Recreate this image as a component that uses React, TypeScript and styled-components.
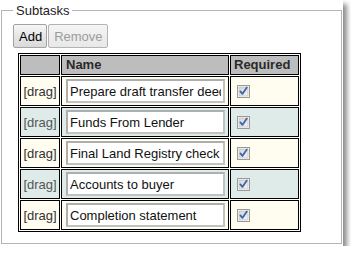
import * as React from 'react';
import styled, { createGlobalStyle } from 'styled-components';

interface Task {
    name: string,
    required: boolean,
}

const tasks: Task[] = [
    { name: 'Prepare draft transfer deed', required: true },
    { name: 'Funds From Lender', required: true },
    { name: 'Final Land Registry check', required: true },
    { name: 'Accounts to buyer', required: true },
    { name: 'Completion statement', required: true },
]

const Check = () => (
    <svg width="13" height="13" viewBox="0 0 13 13">
        <defs>
            <linearGradient id="cbfill" x1="0" y1="0" x2="1" y2="1">
                <stop offset="0" stopColor="#d4d4d4" />
                <stop offset="1" stopColor="#f4f4f4" />
            </linearGradient>
        </defs>
        <rect x="0.5" y="0.5" width="12" height="12" fill="#fff" stroke="#9a9a9a" />
        <rect x="2" y="2" width="9" height="9" fill="url(#cbfill)" stroke="#c4c4c4" strokeWidth="0.8" />
        <path d="M3.4 6.4 L5.4 8.9 L9.8 2.6" fill="none" stroke="#3d67a8" strokeWidth="1.8" strokeLinecap="round" strokeLinejoin="round" />
    </svg>
)

export default function App() {
    return (
        <Window>
            <GlobalStyle />
            <Fieldset>
                <Legend>Subtasks</Legend>
                <ButtonBar>
                    <Button type="button">Add</Button>
                    <Button type="button" disabled>Remove</Button>
                </ButtonBar>
                <Table>
                    <thead>
                        <tr>
                            <DragHead />
                            <NameHead>Name</NameHead>
                            <RequiredHead>Required</RequiredHead>
                        </tr>
                    </thead>
                    <tbody>
                        {tasks.map((t, i) => (
                            <Row key={t.name} $alt={i % 2 === 1}>
                                <DragCell $alt={i % 2 === 1}>[drag]</DragCell>
                                <NameCell>
                                    <NameInput type="text" defaultValue={t.name} />
                                </NameCell>
                                <RequiredCell>
                                    {t.required && <CheckWrap><Check /></CheckWrap>}
                                </RequiredCell>
                            </Row>
                        ))}
                    </tbody>
                </Table>
            </Fieldset>
        </Window>
    )
}

const GlobalStyle = createGlobalStyle`
    html, body {
        margin: 0;
        padding: 0;
        background: #fff;
        font-family: "Liberation Sans", Arial, sans-serif;
        font-size: 13px;
        color: #222;
    }
`

const Window = styled.div`
    width: 343px;
    height: 246px;
    box-sizing: border-box;
    padding: 3px 0 0 1px;
    background: #fff;
    box-shadow: 4px 4px 5px rgba(0, 0, 0, 0.45);
`

const Fieldset = styled.fieldset`
    box-sizing: border-box;
    width: 341px;
    height: 241px;
    margin: 0;
    padding: 6px 11px 0;
    border: 1px solid #b4b4b4;
    box-shadow: inset 1px 1px 0 #fff;
`

const Legend = styled.legend`
    padding: 0 3px;
    font-size: 13px;
    line-height: 15px;
    color: #222;
`

const ButtonBar = styled.div`
    display: flex;
    gap: 1px;
`

const Button = styled.button`
    height: 24px;
    padding: 0 4px 0 5px;
    font-family: "Liberation Sans", Arial, sans-serif;
    font-size: 13px;
    color: #000;
    background: linear-gradient(#f6f6f6, #e6e6e6 50%, #dadada);
    border: 1px solid #a3a3a3;
    border-radius: 2px;

    &:disabled {
        color: #9c9c9c;
        background: linear-gradient(#f4f4f4, #e8e8e8);
        border-color: #b3b3b3;
    }
`

const Table = styled.table`
    margin: 5px 0 0 5px;
    width: 281px;
    table-layout: fixed;
    border: 1px solid #000;
    border-spacing: 1px;
`

const HeadCell = styled.th`
    height: 14px;
    padding: 2px 3px;
    background: #bdbdbd;
    border: 1px solid #000;
    font-size: 13px;
    line-height: 14px;
    font-weight: bold;
    text-align: left;
    color: #2a2a2a;
`

const DragHead = styled(HeadCell)`
    width: 38px;
    padding: 2px 0;
`

const NameHead = styled(HeadCell)`
    width: 158px;
    padding: 2px 4px;
`

const RequiredHead = styled(HeadCell)`
    width: 61px;
    padding: 2px 3px;
`

const Row = styled.tr<{ $alt: boolean }>`
    background: ${p => p.$alt ? '#dfebe8' : '#fffdf0'};
`

const Cell = styled.td`
    border: 1px solid #000;
    vertical-align: middle;
`

const DragCell = styled(Cell)<{ $alt: boolean }>`
    padding: 0;
    text-align: center;
    color: ${p => p.$alt ? '#555' : '#333'};
`

const NameCell = styled(Cell)`
    padding: 2px 3px 2px 4px;
`

const NameInput = styled.input`
    display: block;
    box-sizing: border-box;
    width: 159px;
    height: 24px;
    margin: 0;
    padding: 0 2px;
    font-family: "Liberation Sans", Arial, sans-serif;
    font-size: 13px;
    color: #111;
    background: #fff;
    border: 2px solid #c2c2c2;
    border-top-color: #aeaeae;
    border-left-color: #aeaeae;
    outline: none;
`

const RequiredCell = styled(Cell)`
    padding: 0 0 0 6px;
`

const CheckWrap = styled.span`
    display: flex;
    width: 13px;
    height: 13px;
`
